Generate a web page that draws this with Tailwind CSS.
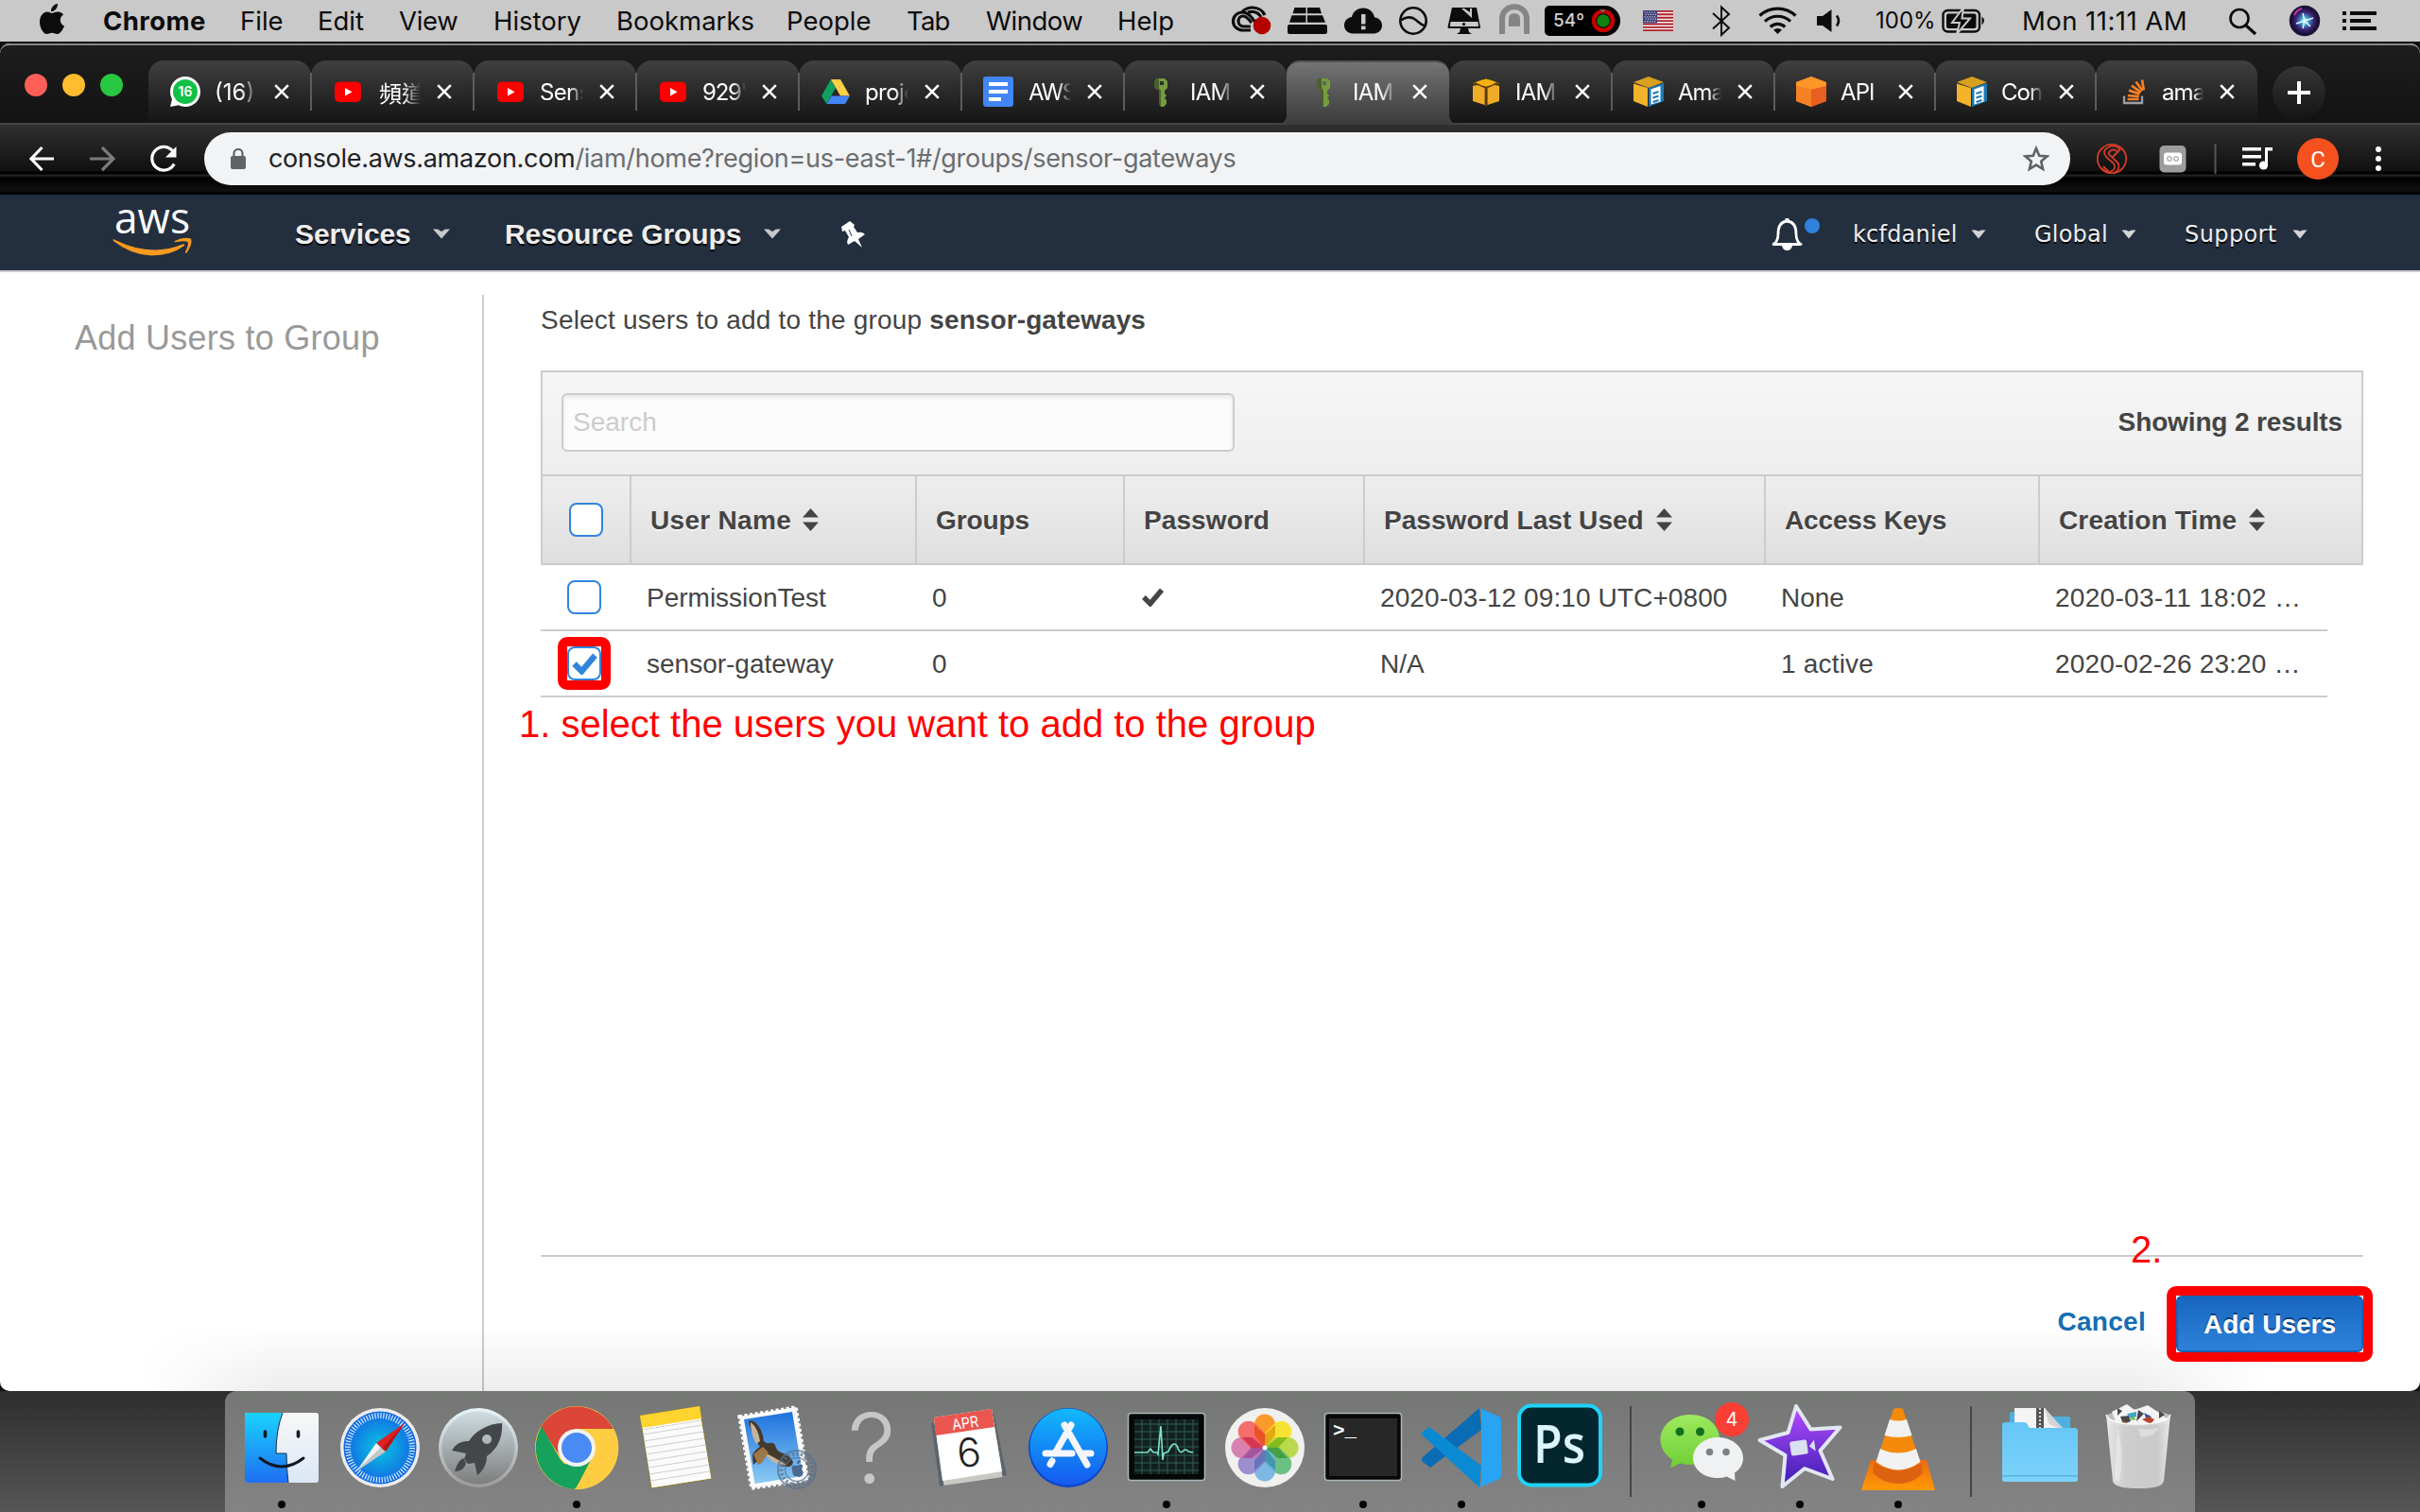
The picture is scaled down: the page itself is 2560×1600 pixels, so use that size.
<!DOCTYPE html>
<html lang="en">
<head>
<meta charset="utf-8">
<title>IAM Management Console</title>
<script src="https://cdn.jsdelivr.net/npm/@tailwindcss/browser@4"></script>
</head>
<body class="w-[2560px] h-[1600px] overflow-hidden bg-[#545454] font-['Inter',sans-serif]">
<svg class="absolute size-0">
  <defs>
    <symbol id="close" viewBox="0 0 16 16"><path d="M1.2 1.2 14.8 14.8M14.8 1.2 1.2 14.8" stroke="#fff" stroke-width="2.6" fill="none"/></symbol>
    <symbol id="youtube" viewBox="0 0 32 32"><rect x="2" y="5.500" width="28" height="21.500" rx="5" fill="#f00"/><path d="M13 12v8.500l7.500-4.250z" fill="#fff"/></symbol>
    <symbol id="key" viewBox="0 0 32 32"><path fill-rule="evenodd" fill="#759c3e" d="M11 2h9l3 3v7l-3 3v3l2 2-2 3 2 2v4l-3 3h-3l-1-2V15l-4-3V5zM15 5v4h4V5z"/><path fill="#4b612c" d="M11 2h3v10l2 3v16h-1l-1-2V15l-5-3V5z"/></symbol>
    <symbol id="cube" viewBox="0 0 32 32"><path fill="#efad27" d="M2 7 16 2l14 5v19l-14 4.500L2 26z"/><path fill="#5b3d0a" d="M14.600 11h3v19h-3zM2 7l4-1 4 3 6 1.500L22 9l4-3 4 1v3l-5-1-7 3h-4l-7-3-5 1zM12 3l4-1.500L20 3l-4 2z"/><path fill="#f7b40e" d="m5 6.500 11-4 11 4-11 4z"/></symbol>
    <symbol id="cubedoc" viewBox="0 0 32 32"><path fill="#d9a01f" d="m0 6 16-6 16 6-16 6z"/><path fill="#f3b32a" d="M0 7.500 15 12v20L0 26z"/><path fill="#1d78b8" d="M16 12 32 7v19l-16 6z"/><path fill="#fff" d="m18.500 13.500 10-3.500v16.500l-10 3z"/><path stroke="#1d78b8" stroke-width="2" d="m20.500 18 6-2m-6 6.500 6-2m-6 6.500 6-2"/></symbol>
    <symbol id="sort" viewBox="0 0 17 24"><path fill="#444" d="M8.500 0 17 9.500H0zM8.500 24 17 14.500H0z"/></symbol>
    <symbol id="caret" viewBox="0 0 18 11"><path fill="#c8c8c8" d="M0 0.500h5l4 2.500 4-2.500h5L9 10.500z"/></symbol>
    <symbol id="caret-small" viewBox="0 0 16 10"><path fill="#d4d4d4" d="M0.500 0.500h4.500l3 1.200 3-1.200h4.500L8 9.500z"/></symbol>
    <symbol id="check" viewBox="0 0 26 22"><path d="M2.500 11 10 18.500 23.500 2.500" fill="none" stroke="currentColor" stroke-width="6"/></symbol>
    <linearGradient id="finderBlue" x1="0" y1="0" x2="0" y2="1"><stop offset="0" stop-color="#19d3ff"/><stop offset="1" stop-color="#1e6ff2"/></linearGradient>
    <linearGradient id="finderWhite" x1="0" y1="0" x2="0" y2="1"><stop offset="0" stop-color="#f8f8f8"/><stop offset="1" stop-color="#dbe7f5"/></linearGradient>
    <radialGradient id="safariBlue"><stop offset="0" stop-color="#08c6e0"/><stop offset="1" stop-color="#1467e4"/></radialGradient>
    <linearGradient id="metal" x1="0" y1="0" x2="0" y2="1"><stop offset="0" stop-color="#cfdde2"/><stop offset="1" stop-color="#7d7d7d"/></linearGradient>
    <linearGradient id="metalRim" x1="0" y1="0" x2="0" y2="1"><stop offset="0" stop-color="#e6f5fa"/><stop offset="1" stop-color="#9a9a9a"/></linearGradient>
    <linearGradient id="sky" x1="0" y1="0" x2="0" y2="1"><stop offset="0" stop-color="#1d72de"/><stop offset="1" stop-color="#8bcbf4"/></linearGradient>
    <linearGradient id="store" x1="0" y1="0" x2="0" y2="1"><stop offset="0" stop-color="#12b9fb"/><stop offset="1" stop-color="#1559f0"/></linearGradient>
    <linearGradient id="star" x1="0" y1="0" x2="0" y2="1"><stop offset="0" stop-color="#b44cff"/><stop offset="1" stop-color="#3c1cb4"/></linearGradient>
    <linearGradient id="chatGreen" x1="0" y1="0" x2="0" y2="1"><stop offset="0" stop-color="#9eea5f"/><stop offset="1" stop-color="#6fcf35"/></linearGradient>
    <linearGradient id="orange" x1="0" y1="0" x2="0" y2="1"><stop offset="0" stop-color="#ec6a10"/><stop offset="1" stop-color="#ff9a06"/></linearGradient>
    <linearGradient id="folder" x1="0" y1="0" x2="0" y2="1"><stop offset="0" stop-color="#65c6f6"/><stop offset="1" stop-color="#7dd3fb"/></linearGradient>
    <linearGradient id="bin" x1="0" y1="0" x2="1" y2="0"><stop offset="0" stop-color="#ededed"/><stop offset=".3" stop-color="#d2d2d2"/><stop offset=".8" stop-color="#cfcfcf"/><stop offset="1" stop-color="#efefef"/></linearGradient>
    <radialGradient id="siri"><stop offset="0" stop-color="#f4ffff"/><stop offset=".3" stop-color="#3d93c4"/><stop offset=".6" stop-color="#3f2478"/><stop offset="1" stop-color="#0c0a20"/></radialGradient>
  </defs>
</svg>

<!-- macOS menu bar -->
<header class="flex h-11 items-center bg-[#c9c9c9] text-[27.5px] leading-[44px] text-[#0c0c0c] whitespace-nowrap">
  <svg class="w-[109px] h-11 shrink-0" viewBox="0 0 109 44"><path fill="#0c0c0c" d="M61 4c.3 4.200-3.200 8.300-7 8.200C53.600 8.200 57.200 4.300 61 4zM54.800 14c1.500 0 3.600-1.800 6.700-1.600 2.200.1 4.300 1 5.600 3-4.900 3-4.100 9.900.9 12-1.500 4-4.600 8.600-7.600 8.600-2 0-2.900-1.300-5.400-1.300-2.600 0-3.600 1.300-5.400 1.300C45.800 36 42 29 42 23.400c0-6.800 4-10.900 8-10.900 2.200 0 3.700 1.500 4.800 1.500z"/></svg>
  <span class="w-[145px] font-bold tracking-[0.4px]">Chrome</span>
  <span class="w-[82px]">File</span>
  <span class="w-[86px]">Edit</span>
  <span class="w-[100px] tracking-[-0.3px]">View</span>
  <span class="w-[130px]">History</span>
  <span class="w-[180px]">Bookmarks</span>
  <span class="w-[127px]">People</span>
  <span class="w-[84px] tracking-[-0.8px]">Tab</span>
  <span class="w-[139px] tracking-[-0.5px]">Window</span>
  <span class="w-[116px]">Help</span>
  <svg class="w-[54px] h-11 shrink-0" viewBox="1298 0 54 44"><g fill="none" stroke="#0c0c0c" stroke-width="3.200"><path d="M1323 32h-8c-6 0-10.500-4-10.500-9.500s4.500-9.500 10-9.500c6.500 0 10 6 13 10"/><path d="M1314 12.500c3-3 7-4.500 11-4.500 6 0 11 3.500 13 8"/><path d="M1323 28h-7c-4 0-6-2.500-6-5.500s2-5.500 5-5.500c4 0 6 4 9 7"/><path d="M1320 13c7-2 11 0 14 5"/></g><circle cx="1335" cy="27" r="9.300" fill="#b50000"/></svg>
  <svg class="w-[60px] h-11 shrink-0" viewBox="1352 0 60 44"><path fill="#0c0c0c" d="M1369.500 8h12v6.200h-14zM1383 8h13l2 6.200h-15zM1366.500 16.200h15v7.500h-17.500zM1383 16.200h16l3 7.500h-19zM1362 28q0-2 2-2h38q2 0 2 2v6q0 2-2 2h-38q-2 0-2-2z"/></svg>
  <svg class="w-[60px] h-11 shrink-0" viewBox="1412 0 60 44"><path fill="#0c0c0c" d="M1431 35.500c-5 0-9-4-9-8.500 0-5 3.500-8.500 8-9 1-5.500 6-9.500 12-9.500s11 4 12 9.800c5 .7 8 4.200 8 8.700s-4 8.500-8.500 8.500z"/><path fill="#c9c9c9" d="M1440 15h4.500v10.500h-4.500zM1440 27.500h4.500v3.700h-4.500z"/></svg>
  <svg class="w-[46px] h-11 shrink-0" viewBox="1472 0 46 44"><g fill="none" stroke="#0c0c0c" stroke-width="2.600"><circle cx="1495" cy="22" r="13.700"/><path d="M1482 21.500c5-4 11-4 15-1s6 6 11 7"/></g></svg>
  <svg class="w-[60px] h-11 shrink-0" viewBox="1518 0 60 44"><path fill="#0c0c0c" d="M1536 8h26l4 21q0 1-1 1h-32q-1.500 0-1.500-1.500zM1545 30h8l1 4 3 2h-16l3-2z"/><path fill="#c9c9c9" d="M1534.500 23h29l.6 5h-30.300zM1546 9l11 10v-10h-2v4l-6-4z"/><circle cx="1548.500" cy="25.500" r="1.600" fill="#0c0c0c"/></svg>
  <svg class="w-[56px] h-11 shrink-0" viewBox="1578 0 56 44"><path d="M1589 36V20c0-17 26-17 26 0v16" fill="none" stroke="#858585" stroke-width="6"/><path d="M1596 28v-8q0-6 6-6t6 6v8z" fill="#858585"/></svg>
  <div class="flex h-8 w-20 shrink-0 items-center rounded-l-[5px] rounded-r-2xl bg-black pl-[9px] text-[19px] leading-8 font-medium text-[#d0d0d0]">
    <span class="w-10">54º</span>
    <svg class="size-[26px]" viewBox="0 0 26 26"><circle cx="13" cy="13" r="10" fill="none" stroke="#c80000" stroke-width="4.500"/><path d="m9 1 4 4 2-4z" fill="#666"/><circle cx="13" cy="13" r="6.800" fill="#0f8212"/></svg>
  </div>
  <svg class="ml-6 mr-[34px] w-8 h-[22px] shrink-0" viewBox="0 0 32 22"><path fill="#f3f3f3" d="M0 0h32v22H0z"/><path stroke="#b01f2a" stroke-width="1.900" d="M0 .9h32M0 4.300h32M0 7.700h32M0 11.100h32M0 14.500h32M0 17.900h32M0 21.100h32"/><path fill="#3f3f78" d="M0 0h15v13.500H0z"/><path stroke="#cfd0e6" stroke-width="1.200" stroke-dasharray="1.200 1.400" d="M1.500 2h12M2.500 4.400h12M1.500 6.800h12M2.500 9.200h12M1.500 11.600h12"/></svg>
  <svg class="w-[180px] h-11 shrink-0" viewBox="1804 0 180 44"><g fill="none" stroke="#0c0c0c"><path stroke-width="2" d="m1812 14 17 15.500-8 7.500V7.500l8 7.500-17 15.500"/><g stroke-width="3.200"><path d="M1861.500 16.500a28 28 0 0 1 38 0M1867 22.700a19.500 19.500 0 0 1 27 0M1872.800 28.500a11 11 0 0 1 15.500 0"/></g><path stroke-width="2.600" d="M1943 16.500q4 5.500 0 11"/></g><path fill="#0c0c0c" d="m1880.500 36-4.500-4.500q4.500-3 9 0zM1922 17h6l9.500-7v24l-9.500-7h-6z"/></svg>
  <span class="w-[67px] text-[24px]">100%</span>
  <svg class="w-[88px] h-11 shrink-0" viewBox="2050 0 88 44"><rect x="2054.500" y="11" width="38.500" height="22.500" rx="5" fill="none" stroke="#0c0c0c" stroke-width="2.400"/><rect x="2058" y="14.500" width="31.500" height="15.500" rx="2" fill="#0c0c0c"/><path fill="#0c0c0c" d="M2095.500 17.500q5 4 0 9z"/><path fill="#0c0c0c" stroke="#c9c9c9" stroke-width="2" d="m2076 8-12 16h8l-3 12 14-16.500h-8.500z"/></svg>
  <span class="w-[213px] tracking-[0.45px]">Mon 11:11 AM</span>
  <svg class="w-[208px] h-11 shrink-0" viewBox="2352 0 208 44"><g fill="none" stroke="#0c0c0c"><circle cx="2369" cy="19.500" r="9.500" stroke-width="2.600"/><path stroke-width="3.200" d="m2376 27 10 9"/></g><circle cx="2438" cy="22" r="15.500" fill="url(#siri)" stroke="#20163c" stroke-width="1.500"/><path stroke="#d8fbff" stroke-width="1.500" fill="none" d="m2429 25 9-3 9-3m-11 11 2-8-2-8m2 8 6 6"/><path stroke="#c13a9c" stroke-width="2" fill="none" d="M2427 16q3-6 8-7"/><path fill="#0c0c0c" d="M2478 12h4v4h-4zM2486 12h28v4h-28zM2478 20h4v4h-4zM2486 20h22v4h-22zM2478 28h4v4h-4zM2486 28h28v4h-28z"/></svg>
</header>

<div class="bg-[#101010] pt-0.5">
<!-- Browser window -->
<div class="flex h-[1426px] flex-col overflow-hidden rounded-t-[10px] rounded-b-[10px] bg-white">
  <!-- Tab strip -->
  <div class="flex h-[84px] shrink-0 rounded-t-[10px] border-t-2 border-[#858787] bg-linear-to-b from-[#1d1d1d] to-[#131313] text-[24px] text-white">
    <div class="flex w-[157px] items-start gap-4 pt-[30px] pl-[26px]">
      <span class="size-6 rounded-full bg-[#ff5f57]"></span><span class="size-6 rounded-full bg-[#febc2e]"></span><span class="size-6 rounded-full bg-[#28c840]"></span>
    </div>
    <div class="flex pt-4">
      <div class="flex h-[66px] w-[172px] items-center rounded-t-[16px] bg-linear-to-b from-[#404040] to-[#151515] pl-[23px]">
        <svg class="mr-[15px] size-8 shrink-0" viewBox="0 0 32 32"><path fill="#fff" d="M16 0C25 0 32 7 32 16s-7 16-16 16c-3 0-5-.6-7-1.700L0 32l2-8C.8 21.500 0 19 0 16 0 7 7 0 16 0z"/><circle cx="16" cy="16" r="13" fill="#12c046"/><text x="16" y="21" text-anchor="middle" font-family="Inter" font-size="14" font-weight="600" fill="#fff">16</text></svg>
        <span class="mt-0.5 w-[46px] overflow-hidden whitespace-nowrap [mask-image:linear-gradient(to_right,#000_60%,transparent)]">(16)</span>
        <svg class="ml-[17px] size-4"><use href="#close"/></svg>
      </div>
      <div class="flex h-[66px] w-[172px] items-center rounded-t-[16px] bg-linear-to-b from-[#404040] to-[#151515]">
        <span class="h-10 w-0.5 -ml-px bg-[#5c5c5c] mr-[22px]"></span>
        <svg class="mr-[15px] size-8 shrink-0"><use href="#youtube"/></svg>
        <span class="mt-0.5 w-[46px] overflow-hidden whitespace-nowrap pl-0.5 font-['Noto_Sans_CJK_TC',sans-serif] leading-8 [mask-image:linear-gradient(to_right,#000_60%,transparent)]">頻道</span>
        <svg class="ml-[17px] size-4"><use href="#close"/></svg>
      </div>
      <div class="flex h-[66px] w-[172px] items-center rounded-t-[16px] bg-linear-to-b from-[#404040] to-[#151515]">
        <span class="h-10 w-0.5 -ml-px bg-[#5c5c5c] mr-[22px]"></span>
        <svg class="mr-[15px] size-8 shrink-0"><use href="#youtube"/></svg>
        <span class="mt-0.5 w-[46px] overflow-hidden whitespace-nowrap tracking-[-0.7px] [mask-image:linear-gradient(to_right,#000_70%,transparent)]">Sensor</span>
        <svg class="ml-[17px] size-4"><use href="#close"/></svg>
      </div>
      <div class="flex h-[66px] w-[172px] items-center rounded-t-[16px] bg-linear-to-b from-[#404040] to-[#151515]">
        <span class="h-10 w-0.5 -ml-px bg-[#5c5c5c] mr-[22px]"></span>
        <svg class="mr-[15px] size-8 shrink-0"><use href="#youtube"/></svg>
        <span class="mt-0.5 w-[46px] overflow-hidden whitespace-nowrap tracking-[-1.2px] [mask-image:linear-gradient(to_right,#000_70%,transparent)]">929'</span>
        <svg class="ml-[17px] size-4"><use href="#close"/></svg>
      </div>
      <div class="flex h-[66px] w-[172px] items-center rounded-t-[16px] bg-linear-to-b from-[#404040] to-[#151515]">
        <span class="h-10 w-0.5 -ml-px bg-[#5c5c5c] mr-[22px]"></span>
        <svg class="mr-[15px] size-8 shrink-0" viewBox="0 0 32 32"><path fill="#0fa05e" d="m11 3 5 9L6.500 29 1 20.500z"/><path fill="#ffcf48" d="M11 3h10l10 17.500H21z"/><path fill="#4285f4" d="M11.500 20.500H31L26 29H6.500z"/></svg>
        <span class="mt-0.5 w-[46px] overflow-hidden whitespace-nowrap tracking-[-0.6px] [mask-image:linear-gradient(to_right,#000_70%,transparent)]">project</span>
        <svg class="ml-[17px] size-4"><use href="#close"/></svg>
      </div>
      <div class="flex h-[66px] w-[172px] items-center rounded-t-[16px] bg-linear-to-b from-[#404040] to-[#151515]">
        <span class="h-10 w-0.5 -ml-px bg-[#5c5c5c] mr-[22px]"></span>
        <svg class="mr-[15px] size-8 shrink-0" viewBox="0 0 32 32"><rect width="32" height="32" rx="3" fill="#4285f4"/><path fill="#fff" d="M6 6h20v4H6zM6 14h20v4H6zM6 22h13v4H6z"/></svg>
        <span class="mt-0.5 w-[46px] overflow-hidden whitespace-nowrap pl-px tracking-[-1.6px] [mask-image:linear-gradient(to_right,#000_70%,transparent)]">AWS</span>
        <svg class="ml-[17px] size-4"><use href="#close"/></svg>
      </div>
      <div class="flex h-[66px] w-[172px] items-center rounded-t-[16px] rounded-br-[10px] bg-linear-to-b from-[#404040] to-[#151515]">
        <span class="h-10 w-0.5 -ml-px bg-[#5c5c5c] mr-[22px]"></span>
        <svg class="mr-[15px] size-8 shrink-0"><use href="#key"/></svg>
        <span class="mt-0.5 w-[46px] overflow-hidden whitespace-nowrap tracking-[-0.7px] [mask-image:linear-gradient(to_right,#000_65%,transparent)]">IAM</span>
        <svg class="ml-[17px] size-4"><use href="#close"/></svg>
      </div>
      <div class="relative flex h-[68px] w-[172px] items-center rounded-t-[14px] border-t-2 border-[#555] bg-linear-to-b from-[#747474] to-[#3b3b3b] pb-1 pl-[23px]">
        <svg class="absolute bottom-0 -left-3 h-3 w-3" viewBox="0 0 12 12"><path fill="#404040" d="M12 0v12H0Q12 12 12 0z"/></svg>
        <svg class="absolute -right-3 bottom-0 h-3 w-3" viewBox="0 0 12 12"><path fill="#404040" d="M0 0v12h12Q0 12 0 0z"/></svg>
        <svg class="mr-[15px] size-8 shrink-0"><use href="#key"/></svg>
        <span class="mt-0.5 w-[46px] overflow-hidden whitespace-nowrap tracking-[-0.7px] [mask-image:linear-gradient(to_right,#000_65%,transparent)]">IAM</span>
        <svg class="ml-[17px] size-4"><use href="#close"/></svg>
      </div>
      <div class="flex h-[66px] w-[172px] items-center rounded-t-[16px] rounded-bl-[10px] bg-linear-to-b from-[#404040] to-[#151515] pl-[23px]">
        <svg class="mr-[15px] size-8 shrink-0"><use href="#cube"/></svg>
        <span class="mt-0.5 w-[46px] overflow-hidden whitespace-nowrap tracking-[-0.7px] [mask-image:linear-gradient(to_right,#000_65%,transparent)]">IAM</span>
        <svg class="ml-[17px] size-4"><use href="#close"/></svg>
      </div>
      <div class="flex h-[66px] w-[172px] items-center rounded-t-[16px] bg-linear-to-b from-[#404040] to-[#151515]">
        <span class="h-10 w-0.5 -ml-px bg-[#5c5c5c] mr-[22px]"></span>
        <svg class="mr-[15px] size-8 shrink-0"><use href="#cubedoc"/></svg>
        <span class="mt-0.5 w-[46px] overflow-hidden whitespace-nowrap tracking-[-1px] [mask-image:linear-gradient(to_right,#000_70%,transparent)]">Amaz</span>
        <svg class="ml-[17px] size-4"><use href="#close"/></svg>
      </div>
      <div class="flex h-[66px] w-[170px] items-center rounded-t-[16px] bg-linear-to-b from-[#404040] to-[#151515]">
        <span class="h-10 w-0.5 -ml-px bg-[#5c5c5c] mr-[22px]"></span>
        <svg class="mr-[15px] size-8 shrink-0" viewBox="0 0 32 32"><path fill="#ef6a20" d="m0 6 16-6 16 6v20l-16 6-16-6z"/><path fill="#ff9728" d="M16 0 32 6v4l-16 4L0 10V6z"/><path fill="#f58025" d="m0 10 16 4v18L0 26z"/><path fill="#e95f1f" d="m32 10-16 4v18l16-6z"/></svg>
        <span class="mt-0.5 w-[44px] overflow-hidden whitespace-nowrap tracking-[-0.9px] [mask-image:linear-gradient(to_right,#000_75%,transparent)]">API</span>
        <svg class="ml-[17px] size-4"><use href="#close"/></svg>
      </div>
      <div class="flex h-[66px] w-[170px] items-center rounded-t-[16px] bg-linear-to-b from-[#404040] to-[#151515]">
        <span class="h-10 w-0.5 -ml-px bg-[#5c5c5c] mr-[22px]"></span>
        <svg class="mr-[15px] size-8 shrink-0"><use href="#cubedoc"/></svg>
        <span class="mt-0.5 w-[44px] overflow-hidden whitespace-nowrap tracking-[-1px] [mask-image:linear-gradient(to_right,#000_70%,transparent)]">Conf</span>
        <svg class="ml-[17px] size-4"><use href="#close"/></svg>
      </div>
      <div class="flex h-[66px] w-[171px] items-center rounded-t-[16px] bg-linear-to-b from-[#404040] to-[#151515]">
        <span class="h-10 w-0.5 -ml-px bg-[#5c5c5c] mr-[22px]"></span>
        <svg class="mr-[15px] size-8 shrink-0" viewBox="0 0 32 32"><path fill="none" stroke="#9aa0a6" stroke-width="2.300" d="M7 20.500v7.500h19v-7.500"/><path stroke="#f48024" stroke-width="2.700" d="M10.500 24h12M10.800 20l12 1.200M12 14.600l11.500 3.800M15 9.600l9.800 7M19.500 5.500l7 9.500M26 3.500l1.800 11"/></svg>
        <span class="mt-0.5 w-[44px] overflow-hidden whitespace-nowrap tracking-[-0.9px] [mask-image:linear-gradient(to_right,#000_75%,transparent)]">amaz</span>
        <svg class="ml-[17px] size-4"><use href="#close"/></svg>
      </div>
    </div>
    <div class="mt-[22px] ml-4 flex size-14 items-center justify-center rounded-full bg-linear-to-b from-[#363636] to-[#151515]">
      <svg class="size-6" viewBox="0 0 24 24"><path stroke="#fff" stroke-width="4" d="M12 0v24M0 12h24"/></svg>
    </div>
  </div>

  <!-- Toolbar -->
  <div class="flex h-[76px] shrink-0 items-start border-t-2 border-[#454545] bg-[linear-gradient(to_bottom,#303030_0,#101010_49px,#000_50px,#000_52px,#222_53px,#222_54px,#000_56px,#101010_70px,#000_72px)] pt-2">
    <svg class="h-14 w-[216px] shrink-0" viewBox="0 140 216 56"><g fill="none" stroke-width="3.200"><path stroke="#fff" d="M57 168H33.500M44.500 156 33 168l11.500 12"/><path stroke="#7a7a7a" d="M95 168h24.500M108 156l12 12-12 12"/><path stroke="#fff" d="M182.500 159.500a12.400 12.400 0 1 0 1.700 14"/></g><path fill="#fff" d="M186.500 155v11.500H175z"/></svg>
    <div class="flex h-14 w-[1974px] items-center rounded-full bg-[#f1f3f4] text-[27px] tracking-[-0.3px] whitespace-nowrap text-[#6a6d71]">
      <svg class="ml-[28px] h-[22px] w-4" viewBox="0 0 16 22"><rect y="8" width="16" height="14" rx="2" fill="#5f6368"/><path fill="none" stroke="#5f6368" stroke-width="2.200" d="M3.500 9V5.500a4.500 4.500 0 0 1 9 0V9"/></svg>
      <span class="mt-px ml-6"><span class="text-[#202124]">console.aws.amazon.com</span>/iam/home?region=us-east-1#/groups/sensor-gateways</span>
      <svg class="mr-[22px] ml-auto size-7" viewBox="0 0 28 28"><path fill="none" stroke="#5f6368" stroke-width="2.600" d="m14 3 3.200 7.700 8.300.7-6.300 5.400 1.900 8.100-7.100-4.300-7.100 4.300 1.900-8.100-6.300-5.400 8.300-.7z"/></svg>
    </div>
    <svg class="h-14 w-[370px] shrink-0" viewBox="2190 140 370 56"><g fill="none" stroke="#d23c28" stroke-width="1.800"><circle cx="2234" cy="168" r="15.200"/><path d="M2243 158q-6-6-13-2t-2 10l8 7q3 5-2 8t-11-3M2240 160q-5-3-8 0t1 5l8 8q2 7-5 10M2225 176l7 7M2243 158l-9 9"/></g><rect x="2284.500" y="154" width="28" height="28.500" rx="5" fill="#9d9d9d"/><rect x="2289" y="161.500" width="19" height="13" rx="3" fill="#fff"/><g fill="none" stroke="#b4b4b4" stroke-width="1.500"><circle cx="2295" cy="168" r="2.200"/><circle cx="2302" cy="168" r="2.200"/></g><path fill="#555" d="M2342.500 152h2v32h-2z"/><path fill="#fff" d="M2372 156h20v3.400h-20zM2372 164h20v3.400h-20zM2372 172h14v3.400h-14zM2396 156h8v3.400h-5v15h-3z"/><circle cx="2394.500" cy="175" r="4.600" fill="#fff"/><circle cx="2452" cy="168" r="22" fill="#f4511e"/><text x="2452" y="176.500" text-anchor="middle" font-family="Roboto" font-size="24" fill="#fff">C</text><g fill="#fff"><circle cx="2516" cy="158" r="3"/><circle cx="2516" cy="168" r="3"/><circle cx="2516" cy="178" r="3"/></g></svg>
  </div>

  <!-- AWS navigation -->
  <nav class="flex h-[82px] shrink-0 items-center border-b-2 border-[#cdc9d2] bg-[#232f3e] pt-[3px] text-[#eee] [text-shadow:0_2px_0_#000]">
    <svg class="h-[80px] w-[310px] shrink-0 [text-shadow:none]" viewBox="0 207 310 80"><text x="121" y="246" textLength="80" lengthAdjust="spacingAndGlyphs" font-family="Open Sans" font-weight="500" font-size="45" fill="#fff">aws</text><path fill="#f79a1f" d="M121 252.500q38 19 72 5 3-1 2 1.500-14 10.500-35 10.500-22-1-40-15.500-1-3 1-1.500zM185 254q9-5 17-2.500 2 6-4.500 15-2 1-1.500-1 4-8 2.500-10.500-3-1.500-13 .3-2-.3-.5-1.300z"/></svg>
    <span class="ml-0.5 w-[146px] font-['Liberation_Sans',sans-serif] text-[30px] font-bold tracking-[-0.1px]">Services</span>
    <svg class="h-[11px] w-[18px]"><use href="#caret"/></svg>
    <span class="ml-[58px] w-[274px] font-['Liberation_Sans',sans-serif] text-[30px] font-bold tracking-[-0.1px]">Resource Groups</span>
    <svg class="h-[11px] w-[18px]"><use href="#caret"/></svg>
    <svg class="ml-[63px] h-7 w-[26px]" viewBox="0 0 26 28"><path fill="#fff" d="m10 0 5 4-1 2 4 6q5-1 8 2l-7 5 4 9-8-7-7 4q-2-4 1-8L5 10l-3 1-1-5z"/><path stroke="#232f3e" stroke-width="1" d="m9 9 3 7"/></svg>
    <svg class="ml-auto h-[38px] w-[54px]" viewBox="1874 228 54 38"><path d="M1877 257.500q5-3 5-11c0-9 3-13 9.500-13.500 6.500.5 9.500 4.500 9.500 13.500q0 8 5 11z" fill="none" stroke="#fff" stroke-width="2.800" stroke-linejoin="round"/><path fill="#fff" d="M1886 259h11q-1 5-5.500 5t-5.500-5zM1889.500 230h4v4h-4z"/><circle cx="1918" cy="238" r="8" fill="#2e82dc"/></svg>
    <span class="ml-[33px] w-[125px] font-['DejaVu_Sans',sans-serif] text-[24px] tracking-[0.2px]">kcfdaniel</span>
    <svg class="h-[10px] w-4"><use href="#caret-small"/></svg>
    <span class="ml-[51px] w-[92px] font-['DejaVu_Sans',sans-serif] text-[24px] tracking-[0.2px]">Global</span>
    <svg class="h-[10px] w-4"><use href="#caret-small"/></svg>
    <span class="ml-[51px] w-[114px] font-['DejaVu_Sans',sans-serif] text-[24px] tracking-[0.4px]">Support</span>
    <svg class="mr-[119px] h-[10px] w-4"><use href="#caret-small"/></svg>
  </nav>

  <!-- Console page -->
  <div class="relative flex grow pt-6 font-['Liberation_Sans',sans-serif] text-[28px] leading-8 text-[#444]">
    <aside class="w-[512px] shrink-0 border-r-2 border-[#ccc] pt-[24px] pl-[79px] text-[36px] leading-[44px] tracking-[0.25px] text-[#999]">Add Users to Group</aside>
    <main class="relative ml-[60px] flex w-[1928px] flex-col">
      <p class="mt-[11px] tracking-[0.2px]">Select users to add to the group <b class="tracking-[0.1px]">sensor-gateways</b></p>
      <div class="mt-[37px] border-2 border-[#ccc]">
        <div class="flex h-[108px] justify-between bg-linear-to-b from-[#f6f6f6] to-[#eee] px-5 pt-[22px] leading-[62px]">
          <div class="h-[62px] w-[712px] rounded-[6px] border-2 border-[#ccc] bg-[#fcfcfc] pl-[10px] leading-[58px] text-[#ccc] shadow-[inset_0_3px_4px_rgba(0,0,0,0.08)]">Search</div>
          <b class="tracking-[-0.13px]">Showing 2 results</b>
        </div>
        <div class="grid h-[94px] grid-cols-[94px_302px_220px_254px_424px_290px_340px] border-t-2 border-[#ccc] bg-linear-to-b from-[#eee] to-[#dfdfdf] leading-[94px] font-bold whitespace-nowrap [text-shadow:0_2px_0_#fff8]">
          <div class="flex items-center border-r-2 border-[#ccc] pl-7"><span class="size-9 rounded-lg border-2 border-[#3184db] bg-white"></span></div>
          <div class="flex h-[92px] items-center gap-3 border-r-2 border-[#ccc] pl-5"><span class="mt-0.5 tracking-[0.3px]">User Name</span><svg class="h-6 w-[17px]"><use href="#sort"/></svg></div>
          <div class="h-[92px] border-r-2 border-[#ccc] pl-5 tracking-[-0.1px]">Groups</div>
          <div class="h-[92px] border-r-2 border-[#ccc] pl-5 tracking-[0.1px]">Password</div>
          <div class="flex h-[92px] items-center gap-[13px] border-r-2 border-[#ccc] pl-5"><span class="mt-0.5 tracking-[0.05px]">Password Last Used</span><svg class="h-6 w-[17px]"><use href="#sort"/></svg></div>
          <div class="h-[92px] border-r-2 border-[#ccc] pl-5 tracking-[-0.15px]">Access Keys</div>
          <div class="flex h-[92px] items-center gap-[13px] pl-5"><span class="mt-0.5 tracking-[0.15px]">Creation Time</span><svg class="h-6 w-[17px]"><use href="#sort"/></svg></div>
        </div>
      </div>
      <div class="grid h-[70px] w-[1890px] grid-cols-[96px_302px_220px_254px_424px_290px_304px] border-b-2 border-[#ccc] leading-[70px] whitespace-nowrap">
        <div class="flex h-[68px] items-center pl-7"><span class="size-9 rounded-lg border-2 border-[#3184db] bg-white"></span></div>
        <div class="pl-4">PermissionTest</div>
        <div class="pl-4">0</div>
        <div class="flex h-[68px] items-center pl-[17px]"><svg class="h-5 w-[25px]"><use href="#check"/></svg></div>
        <div class="pl-4 tracking-[0.1px]">2020-03-12 09:10 UTC+0800</div>
        <div class="pl-4">None</div>
        <div class="pl-4 tracking-[0.3px]">2020-03-11 18:02 …</div>
      </div>
      <div class="grid h-[70px] w-[1890px] grid-cols-[96px_302px_220px_254px_424px_290px_304px] border-b-2 border-[#ccc] leading-[70px] whitespace-nowrap">
        <div class="flex h-[68px] items-center pl-7"><span class="relative flex size-9 items-center justify-center rounded-lg border-2 border-[#3184db] bg-white text-[#3184db]"><svg class="h-[23px] w-[29px] shrink-0" viewBox="0 0 26 22"><use href="#check"/></svg><span class="absolute -inset-3 rounded-[10px] border-10 border-[#f00]"></span></span></div>
        <div class="pl-4">sensor-gateway</div>
        <div class="pl-4">0</div>
        <div></div>
        <div class="pl-4">N/A</div>
        <div class="pl-4 tracking-[0.2px]">1 active</div>
        <div class="pl-4 tracking-[0.15px]">2020-02-26 23:20 …</div>
      </div>
      <div class="mt-[590px] border-t-2 border-[#ccc]"></div>
      <div class="relative mt-[31px] mr-[-10px] flex items-start justify-end">
        <span class="mt-[22px] mr-[22px] font-bold tracking-[0.3px] text-[#146eb4]">Cancel</span>
        <span class="rounded-[10px] border-10 border-[#f00] bg-white">
          <span class="flex h-[60px] w-[198px] items-center justify-center rounded-[6px] border-2 border-[#1a62b4] bg-linear-to-b from-[#1767c0] to-[#2f83dc] pt-0.5 font-bold text-white [text-shadow:0_-2px_0_#0d3f7c]">Add Users</span>
        </span>
      </div>
      <!-- Instructions laid over the page -->
      <span class="absolute top-[431px] left-[-23px] text-[40px] leading-[46px] whitespace-nowrap text-[#f00]">1. select the users you want to add to the group</span>
      <span class="absolute top-[987px] left-[1682px] text-[40px] leading-[46px] text-[#f00]">2.</span>
    </main>
    <div class="pointer-events-none absolute bottom-0 left-[150px] h-[70px] w-[2250px] bg-linear-to-t from-black/7 to-transparent [mask-image:linear-gradient(to_right,transparent,#000_140px,#000_calc(100%_-_140px),transparent)]"></div>
  </div>
</div>
</div>

<!-- Desktop and Dock -->
<footer class="flex h-32 items-stretch bg-linear-to-b from-[#2b2b2b] to-[#565656] pl-[238px] -mt-[10px] pt-[10px] box-content relative -z-10">
  <div class="flex h-32 w-[2084px] rounded-t-xl bg-linear-to-b from-[#757775] to-[#838383] pl-2">
    <svg class="h-32 w-[104px]" viewBox="246 1472 104 128"><rect x="259" y="1495" width="78" height="74" rx="3" fill="url(#finderWhite)"/><path fill="url(#finderBlue)" d="M262 1495h37q-7 18-7 43h11q0 16 2 31h-43q-3 0-3-3v-68q0-3 3-3z"/><path fill="none" stroke="#17324f" stroke-width="1" d="M299 1495q-7 18-7 43h11q0 16 2 31"/><path fill="none" stroke="#111820" stroke-width="3" stroke-linecap="round" d="M275 1543q23 18 46 0"/><path stroke="#111820" stroke-width="3.600" stroke-linecap="round" d="M280.500 1515v5M315.500 1515v5"/><circle cx="298" cy="1592" r="4"/></svg>
    <svg class="h-32 w-[104px]" viewBox="350 1472 104 128"><circle cx="402" cy="1532" r="42" fill="#ececec"/><circle cx="402" cy="1532" r="38.500" fill="url(#safariBlue)"/><circle cx="402" cy="1532" r="34" fill="none" stroke="#e4f4ff" stroke-width="6" stroke-dasharray="1.100 1.870"/><path fill="#e02020" d="m428 1506-30 21 10 9z"/><path fill="#b81414" d="m428 1506-24 27 4 3z"/><path fill="#f2f2f2" d="m377 1557 21-30 5 5z"/><path fill="#c7c7c7" d="m377 1557 26-25 5 4z"/></svg>
    <svg class="h-32 w-[104px]" viewBox="454 1472 104 128"><circle cx="506" cy="1532" r="42" fill="url(#metalRim)"/><circle cx="506" cy="1532" r="38.500" fill="url(#metal)"/><path fill="#43474a" fill-rule="evenodd" d="M531 1506q1 14-6 25-4 6-10 10 0 12-10 20l-3-13-7 1-4-5 2-6-15-3q6-11 18-10 5-8 14-13 10-6 21-6zM515 1518a5 5 0 1 0 .1 0z"/><path fill="#43474a" d="M490 1543q-6 3-9 14 10 0 12-9z"/></svg>
    <svg class="h-32 w-[104px]" viewBox="558 1472 104 128"><circle cx="610" cy="1532" r="44" fill="#ffcd41"/><path fill="#dc4638" d="M572 1510a44 44 0 0 1 77 2.500H610l-18 28z"/><path fill="#16a15d" d="M573 1509.500 592.500 1544q8 11 19 9l-4 23a44 44 0 0 1-34.500-66.500zM626 1543l-17 33-14-26z"/><path fill="#ffcd41" d="M610 1512h39.500a44 44 0 0 1-41 64l18.500-33z"/><circle cx="610" cy="1532" r="20" fill="#f3f3f3"/><circle cx="610" cy="1532" r="16" fill="#4a8af4"/><circle cx="610" cy="1592" r="4"/></svg>
    <svg class="h-32 w-[104px]" viewBox="662 1472 104 128"><path fill="#fbfbfb" stroke="#8a7a30" stroke-width="1" d="m677 1498 63-10 13 77-64 10z"/><path fill="#ffd42f" d="m677 1498 63-10 2.200 13-63 10z"/><path stroke="#cfcfcf" stroke-width="1" fill="none" d="m680 1518 63-10M681 1525l63-10M682 1532l63-10M683.500 1539l63-10M684.500 1546l63-10M686 1553l63-10M687 1560l63-10M688 1567l63-10"/><path stroke="#999" stroke-width="1" stroke-dasharray="1 1.500" d="m679 1513 63-10"/></svg>
    <svg class="h-32 w-[104px]" viewBox="766 1472 104 128"><path fill="#fafafa" stroke="#fafafa" stroke-width="3.500" stroke-dasharray="3.200 2.400" d="m782 1499 60-10 13 77-60 9z"/><path fill="url(#sky)" d="m787 1502 51-8 11.500 68-51 8z"/><path fill="#463a2d" d="M792 1504q3-2 7 1 8 8 9 20 4 3 5 2 5-1 7 2 1 6 6 8 10 3 13 10-1 6-7 5-10-2-19-11-8-2-11 5-3 2-5 4-1-5-1-11 4-6 8-8-9-12-12-27z"/><path fill="#c7b59b" d="M794 1505q8 6 10 20l-4 3q-6-10-6-23zM805 1535q14 7 27 15-12 1-20-8z"/><path fill="#9e7748" d="m797 1539 10-8 6 6-7 11-4 2z"/><g fill="none" stroke="#59718f" stroke-opacity=".75"><circle cx="843" cy="1555" r="20" stroke-width="2"/><circle cx="843" cy="1555" r="12.500" stroke-width="1.500"/><circle cx="843" cy="1555" r="16.500" stroke-width="4" stroke-dasharray="2.500 2"/></g><path fill="#4b688f" d="M838 1556q-2-7 5-5 7-3 6 1-2 3 1 6-3 7-7 4-4 2-5-6zM843 1549q0-4 4-4 0 4-4 4z"/></svg>
    <svg class="h-32 w-[104px]" viewBox="870 1472 104 128"><text x="922" y="1569" text-anchor="middle" font-family="Inter" font-size="102" font-weight="300" fill="#c6c6c6">?</text></svg>
    <svg class="h-32 w-[104px]" viewBox="974 1472 104 128"><path fill="#5d656c" d="m985 1506 66-11 14 66-71 12z"/><path fill="#c9c9c4" d="m988 1502 61-10 11 67 .5 4-62 9z"/><path fill="#fff" d="m988 1500 61-9 11 66-63 10z"/><path fill="#ea564f" d="m988 1500 61-9 3 19-62 9z"/><g transform="rotate(-8.500 1021 1505)"><text x="1021" y="1511.500" text-anchor="middle" font-family="Inter" font-size="16" fill="#fff" textLength="28" lengthAdjust="spacingAndGlyphs">APR</text></g><g transform="rotate(-6 1025 1537)"><text x="1025" y="1552" text-anchor="middle" font-family="Inter" font-size="42" font-weight="300" fill="#222">6</text></g></svg>
    <svg class="h-32 w-[104px]" viewBox="1078 1472 104 128"><circle cx="1130" cy="1532" r="42" fill="#0c45cf"/><circle cx="1130" cy="1531" r="40.500" fill="url(#store)"/><g stroke="#f4f6fa" stroke-width="7" stroke-linecap="round" fill="none"><path d="M1106 1538h28M1146 1538h8M1133 1508l-17 30M1113 1546l-2 3.500M1126 1508l24 42"/></g></svg>
    <svg class="h-32 w-[104px]" viewBox="1182 1472 104 128"><rect x="1193.500" y="1495.500" width="81" height="71" rx="3" fill="#060808" stroke="#a9b8bd" stroke-width="1.500"/><path fill="#12211f" d="M1200 1502h68v58h-68z"/><path stroke="#3d7367" stroke-width="1" d="M1208 1502v58M1217 1502v58M1226 1502v58M1235 1502v58M1244 1502v58M1253 1502v58M1262 1502v58M1200 1507h68M1200 1515h68M1200 1523h68M1200 1531h68M1200 1540h68M1200 1548h68M1200 1556h68" opacity=".75"/><path fill="none" stroke="#7fe3cd" stroke-width="1.600" d="M1200 1537h14l3-4 3 4h4l1 2 3-30 2 36 1-7 5-2q5-12 9-6 3 9 6 6 3-4 6 0l5 1"/><circle cx="1234" cy="1592" r="4"/></svg>
    <svg class="h-32 w-[104px]" viewBox="1286 1472 104 128"><circle cx="1338" cy="1532" r="42" fill="#f0f0ef"/><rect x="1327" y="1496.500" width="22" height="34.500" rx="11" fill="#fb9a2c"/><rect x="1327" y="1496.500" width="22" height="34.500" rx="11" fill="#f7e01f" opacity=".9" transform="rotate(45 1338 1532)"/><rect x="1327" y="1496.500" width="22" height="34.500" rx="11" fill="#b5d63a" opacity=".9" transform="rotate(90 1338 1532)"/><rect x="1327" y="1496.500" width="22" height="34.500" rx="11" fill="#5dba77" opacity=".9" transform="rotate(135 1338 1532)"/><rect x="1327" y="1496.500" width="22" height="34.500" rx="11" fill="#6fb1e2" opacity=".9" transform="rotate(180 1338 1532)"/><rect x="1327" y="1496.500" width="22" height="34.500" rx="11" fill="#9283cb" opacity=".9" transform="rotate(225 1338 1532)"/><rect x="1327" y="1496.500" width="22" height="34.500" rx="11" fill="#d476ac" opacity=".9" transform="rotate(270 1338 1532)"/><rect x="1327" y="1496.500" width="22" height="34.500" rx="11" fill="#f4605c" opacity=".9" transform="rotate(315 1338 1532)"/><g opacity=".85"><path fill="#e8501a" d="M1338 1532l-11-14v-10l11 10z"/><path fill="#e0a010" d="M1338 1532l11-14v-10l-11 10z"/><path fill="#7db81c" d="M1338 1532l14-11h10l-10 11z"/><path fill="#3f9c3a" d="M1338 1532l14 11h10l-10-11z"/><path fill="#3c93a0" d="M1338 1532l11 14v10l-11-10z"/><path fill="#5d72b8" d="M1338 1532l-11 14v10l11-10z"/><path fill="#9c4f9c" d="M1338 1532l-14 11h-10l10-11z"/><path fill="#cf2f52" d="M1338 1532l-14-11h-10l10 11z"/></g><circle cx="1338" cy="1532" r="2.500" fill="#fff"/></svg>
    <svg class="h-32 w-[104px]" viewBox="1390 1472 104 128"><rect x="1401.500" y="1495.500" width="81" height="71" rx="3" fill="#080808" stroke="#a9b8bd" stroke-width="1.500"/><path fill="#272727" d="M1406 1501h72v61h-72z"/><text x="1410" y="1520" font-family="Liberation Mono" font-size="21" font-weight="700" fill="#fff">&gt;_</text><circle cx="1442" cy="1592" r="4"/></svg>
    <svg class="h-32 w-[104px]" viewBox="1494 1472 104 128"><path fill="#0a6cb4" d="m1565 1490 2 23-54 40-8-6q-2-3 0-5z"/><path fill="#0b8ad4" d="m1512 1510 55 41-2 23-60-55q-2-2 0-4z"/><path fill="#29a4f3" d="m1565 1490 21 9q2 1 2 4v59q0 2-2 3l-21 9q2-3 2-6v-72q0-4-2-6z"/><circle cx="1546" cy="1592" r="4"/></svg>
    <svg class="h-32 w-[104px]" viewBox="1598 1472 104 128"><rect x="1607" y="1487.500" width="86" height="84" rx="13" fill="#04262f" stroke="#1fd3fb" stroke-width="4"/><text x="1622" y="1548" textLength="55" lengthAdjust="spacingAndGlyphs" font-family="Open Sans" font-size="56" font-weight="600" fill="#dcf5ff">Ps</text></svg>
    <div class="mt-4 h-24 w-[47px] pl-[22px]"><div class="h-24 w-0.5 bg-[#454545]"></div></div>
    <svg class="h-32 w-[104px]" viewBox="1749 1472 104 128"><path fill="url(#chatGreen)" d="M1788 1497c18 0 31 11 31 26s-13 27-31 27q-5 0-11-1.500l-10 5 2-9c-8-5-12.500-12.500-12.500-21 0-15 13.500-26.500 31.500-26.500z"/><circle cx="1777" cy="1515" r="4.500" fill="#126f1c"/><circle cx="1798.500" cy="1515" r="4.500" fill="#126f1c"/><path fill="#f0f1f2" d="M1817 1521c15 0 27 9.500 27 22 0 6.500-3.500 12-9 15.500l.5 8.500-9-4.500q-4 1.500-9.500 1.500c-15 0-26-9.500-26-21s11-22 26-22z"/><circle cx="1808.500" cy="1536.500" r="3.800" fill="#7c8184"/><circle cx="1826" cy="1536.500" r="3.800" fill="#7c8184"/><circle cx="1832" cy="1502" r="18" fill="#f93e33"/><text x="1832" y="1509" text-anchor="middle" font-family="Inter" font-size="20" fill="#fff">4</text><circle cx="1800" cy="1592" r="4"/></svg>
    <svg class="h-32 w-[104px]" viewBox="1853 1472 104 128"><path fill="url(#star)" stroke="#e3e7f4" stroke-width="4" stroke-linejoin="round" d="m1900 1488 15.500 24.500 31-2-21 24.500 13 30-29.500-11-23.500 19 3-33-27-16 30-8z"/><g transform="rotate(-8 1903 1532)"><rect x="1894" y="1524.500" width="18" height="15" rx="2" fill="#d9e1ef"/><path fill="#d9e1ef" d="m1914 1532 6-6v12z"/></g><circle cx="1904" cy="1592" r="4"/></svg>
    <svg class="h-32 w-[104px]" viewBox="1957 1472 104 128"><path fill="url(#orange)" d="M1979 1545h59l9 32h-78z"/><path fill="#dd6210" d="M1983 1548q25 16 49 0l2 10q-9 12-26 12t-27-12z"/><path fill="#f58a0a" d="M2003 1491q5-2 10 0l18 56q-23 16-46 0z"/><path fill="#f1f1f1" d="M1999 1502q9 3 18 0l5.500 17q-14.500 4-29 0zM1989 1533q19 9 38 0l4.500 14q-23.500 17-47 0z"/><circle cx="2008" cy="1592" r="4"/></svg>
    <div class="mt-4 h-24 w-[46px] pl-[23px]"><div class="h-24 w-0.5 bg-[#454545]"></div></div>
    <svg class="h-32 w-[104px]" viewBox="2107 1472 104 128"><path fill="#4fb0df" d="M2126 1496q0-2 2-2h14l5 5h41q2 0 2 2v20h-64z"/><path fill="#f4f4f4" d="M2131 1490h32l19 22h-51z"/><path fill="#555" d="M2154 1490h8v22h-8z"/><path stroke="#ddd" stroke-width="2" stroke-dasharray="2 2" d="M2158 1490v22"/><path fill="#d4d4d4" d="m2163 1491 20 21q-12-2-16-6z"/><path fill="url(#folder)" d="M2118 1508q0-3 3-3h20q3 0 4 3l2 3h48q3 0 3 3v52q0 2-2 2h-76q-2 0-2-2z"/><path fill="#57b3e2" d="M2118 1561h80v1.500h-80z"/></svg>
    <svg class="h-32 w-[104px]" viewBox="2211 1472 104 128"><path fill="#bdbdbd" d="M2229 1497q33-12 66 0l-2 10h-62z"/><path fill="#f4f4f4" d="m2234 1494 16-8 8 6 14-5 12 8 8 6-6 8h-46z"/><path fill="#484848" d="m2240 1490 5 3-5 5zM2262 1492l6 4-8 8zM2284 1493l6 4-6 4zM2243 1499l9-1 2 6-8 3z"/><path fill="#3fa8c4" d="m2250 1496 10-2v5l-6 2z"/><path fill="#7ac143" d="m2252 1502 6-3 1 4z"/><path fill="#3556a5" d="m2268 1495 8 4-5 4z"/><path fill="#b5452c" d="m2266 1502 7-3 6 3-4 5zM2246 1503l6 4-6 1z"/><path fill="url(#bin)" opacity=".94" d="M2228 1497q3 10 34 10t34-10l-7 70q-1 8-27 8t-27-8z"/><path fill="none" stroke="#fafafa" stroke-width="1.500" d="M2228 1497q3 10 34 10t34-10"/><path fill="#fff" opacity=".35" d="M2240 1510q8 30 2 58l-5-3zM2262 1512q14 2 22-2-5 12-20 10z"/></svg>
  </div>
</footer>
</body>
</html>
